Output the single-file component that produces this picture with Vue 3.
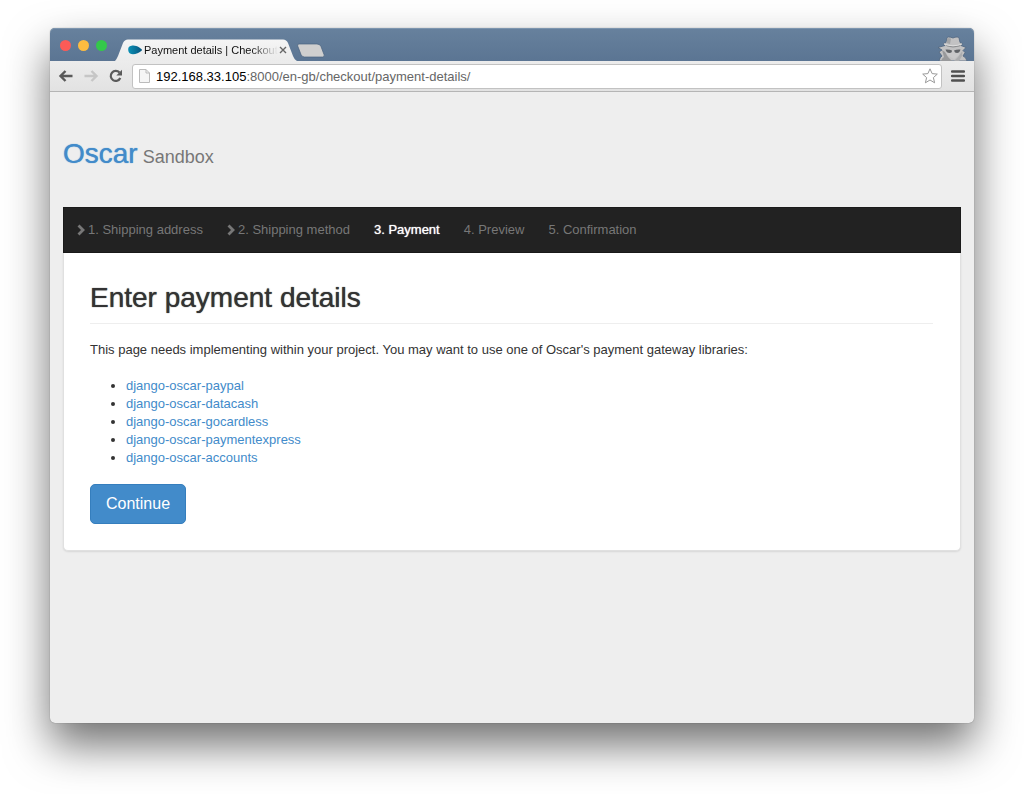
<script setup>
const steps = [
  { label: '1. Shipping address', state: 'done' },
  { label: '2. Shipping method', state: 'done' },
  { label: '3. Payment', state: 'active' },
  { label: '4. Preview', state: 'todo' },
  { label: '5. Confirmation', state: 'todo' },
]
const libraries = [
  'django-oscar-paypal',
  'django-oscar-datacash',
  'django-oscar-gocardless',
  'django-oscar-paymentexpress',
  'django-oscar-accounts',
]
</script>

<template>
  <div class="desktop">
    <div class="window">
      <header class="titlebar">
        <div class="lights">
          <button class="light red" aria-label="Close"></button>
          <button class="light amber" aria-label="Minimise"></button>
          <button class="light green" aria-label="Zoom"></button>
        </div>
        <div class="tab">
          <svg class="tab-shape" viewBox="0 0 182 22" preserveAspectRatio="none" aria-hidden="true">
            <defs>
              <linearGradient id="tabfill" x1="0" y1="0" x2="0" y2="1">
                <stop offset="0" stop-color="#f5f5f5" />
                <stop offset="1" stop-color="#ebebeb" />
              </linearGradient>
            </defs>
            <path d="M0 22C1 21 2 19 3 17L8 4Q9.500 0.500 13 0.500H168Q171.500 0.500 173 4L178 17C179 19 180 21 182 22Z" fill="url(#tabfill)" />
          </svg>
          <svg class="favicon" viewBox="0 0 14 10" aria-hidden="true">
            <defs>
              <linearGradient id="fav" x1="0" x2="1"><stop offset="0" stop-color="#0b91b5" /><stop offset="1" stop-color="#075580" /></linearGradient>
            </defs>
            <path d="M3.500 0.700C6 0 9 1 11 2.300C13 3.600 14 4.500 14 5C14 6 11.500 7.200 9.500 8.200C7 9.300 4 9.800 2 8.500C0 7 -.2 4 .7 2.300C1.300 1.200 2.300 .9 3.500 .7Z" fill="url(#fav)" />
          </svg>
          <span class="tab-title">Payment details | Checkout</span>
          <button class="tab-close" aria-label="Close tab">
            <svg viewBox="0 0 8 8"><path d="M1 1L7 7M7 1L1 7" stroke="#666" stroke-width="1.400" /></svg>
          </button>
        </div>
        <button class="new-tab" aria-label="New tab">
          <svg viewBox="0 0 30 15">
            <path d="M3 1H21Q24 1 25 3.500L28 11.500Q29 14 26.500 14H8.500Q6 14 5 11.500L1.700 3Q1 1 3 1Z" fill="#cfcfcf" stroke="#49627e" stroke-width=".7" />
          </svg>
        </button>
        <svg class="incognito" viewBox="0 0 32 26" aria-hidden="true">
          <path d="M2 26Q3 22 5 21L2 17L5 15L1 12.500L8 10.500Q4.500 8.500 9 7.500L10 3Q10.300 2 11.500 2Q13.500 2 16 3Q18 2 20 2Q21.500 2 22 3L23 7.500Q27 8.500 24 10.500L29 12.500L26 15.500L28 17.500L26 21Q29 22 30 26Z" fill="#c2c2c3" stroke="#50667f" stroke-width=".8" />
          <path d="M10.300 3L14 3.500L13 9L9.500 8Z" fill="#a3a4a6" />
          <path d="M7.500 9Q16 13.500 25 9Q24 12 16 12.500Q9 12 7.500 9Z" fill="#8d8f91" />
          <path d="M7 9Q16 12.500 25 9" fill="none" stroke="#dedede" />
          <path d="M9 14.500Q16 16 23 14.500L22 20L17 24L10 20Z" fill="#c9c9ca" />
          <path d="M8.500 14.500Q12 14 15 15.500Q15 18 12.500 18Q9.500 18 8.500 14.500ZM17 15.500Q20 14 23.500 14.500Q22.500 18 20 18Q17.500 18 17 15.500Z" fill="#606367" />
          <path d="M5 15L8 17L11 22L15 26H4Q5 23 7 22Z" fill="#98999b" />
          <path d="M25.500 16L21 22L17 26H22L25 21Z" fill="#acadaf" />
        </svg>
      </header>

      <div class="toolbar">
        <button class="tool" aria-label="Back">
          <svg viewBox="0 0 16 14"><path d="M14.500 7H3M7.500 2L2.500 7L7.500 12" fill="none" stroke="#5a5a5a" stroke-width="2.400" /></svg>
        </button>
        <button class="tool" aria-label="Forward" disabled>
          <svg viewBox="0 0 16 14"><path d="M1.500 7H13M8.500 2L13.500 7L8.500 12" fill="none" stroke="#c6c6c6" stroke-width="2.400" /></svg>
        </button>
        <button class="tool" aria-label="Reload">
          <svg viewBox="0 0 16 14"><path d="M12.300 9A5 5 0 1 1 11.500 3.600" fill="none" stroke="#5a5a5a" stroke-width="2.200" /><path d="M14 .8V6.500H8.300Z" fill="#5a5a5a" /></svg>
        </button>
        <div class="address">
          <svg class="page-icon" viewBox="0 0 11 14" aria-hidden="true"><path d="M.5 .5H7L10.500 4V13.500H.5Z" fill="#f5f5f5" stroke="#bbb" /><path d="M7 .5V4H10.500" fill="none" stroke="#bbb" /></svg>
          <div class="url"><b>192.168.33.105</b>:8000/en-gb/checkout/payment-details/</div>
          <button class="star" aria-label="Bookmark this page">
            <svg viewBox="0 0 16 16"><path d="M8 .8L10.100 5.600L15.300 6.100L11.400 9.600L12.600 14.800L8 12L3.400 14.800L4.600 9.600L.7 6.100L5.900 5.600Z" fill="#fff" stroke="#999" stroke-linejoin="round" /></svg>
          </button>
        </div>
        <button class="menu" aria-label="Menu">
          <svg viewBox="0 0 14 12"><path d="M1 1.500H13M1 6H13M1 10.500H13" stroke="#505050" stroke-width="2.400" stroke-linecap="round" /></svg>
        </button>
      </div>

      <div class="page">
        <div class="brand"><a href="#">Oscar</a><small>Sandbox</small></div>
        <nav class="steps" aria-label="Checkout progress">
          <ol>
            <li v-for="step in steps" :key="step.label" :class="step.state">
              <svg v-if="step.state === 'done'" class="chevron" viewBox="0 0 8 12" aria-hidden="true"><path d="M1.500 1.500L6 6L1.500 10.500" fill="none" stroke="#777" stroke-width="2.800" /></svg>
              <span>{{ step.label }}</span>
            </li>
          </ol>
        </nav>
        <main class="well">
          <h1>Enter payment details</h1>
          <p>This page needs implementing within your project. You may want to use one of Oscar's payment gateway libraries:</p>
          <ul>
            <li v-for="name in libraries" :key="name"><a href="#">{{ name }}</a></li>
          </ul>
          <button class="continue">Continue</button>
        </main>
      </div>
    </div>
  </div>
</template>

<style>
body {
  margin: 0;
  background: #fff;
}
</style>

<style scoped>
* {
  box-sizing: border-box;
}
.desktop {
  display: flex;
  min-height: 100vh;
  padding: 28px 50px 71px;
  overflow: hidden;
  font-family: "Liberation Sans", Arial, sans-serif;
  font-size: 13px;
  color: #333;
}
button {
  padding: 0;
  border: 0;
  background: none;
  font-family: inherit;
}
svg {
  display: block;
}
a {
  color: #428bca;
  text-decoration: none;
}
.window {
  flex: 1;
  min-width: 0;
  display: flex;
  flex-direction: column;
  border-radius: 5px;
  background: #eee;
  box-shadow: 0 0 1px rgba(0, 0, 0, 0.5), 0 22px 44px rgba(0, 0, 0, 0.56);
}
.titlebar {
  display: flex;
  align-items: flex-end;
  height: 33px;
  padding-right: 5px;
  border-radius: 5px 5px 0 0;
  background: linear-gradient(#67819d, #5b7593);
  box-shadow: inset 0 1px #7d95ae;
}
.lights {
  display: flex;
  gap: 7px;
  align-self: center;
  padding: 2px 8px 0 10px;
}
.light {
  width: 11px;
  height: 11px;
  border-radius: 50%;
}
.red { background: #fc5b57; }
.amber { background: #fdbc40; }
.green { background: #34c84a; }
.tab {
  position: relative;
  display: flex;
  align-items: center;
  width: 182px;
  height: 22px;
  padding: 0 13px 0 13px;
}
.tab-shape {
  position: absolute;
  inset: 0;
  width: 100%;
  height: 100%;
}
.favicon,
.tab-title,
.tab-close {
  position: relative;
}
.favicon {
  flex: none;
  width: 14px;
  height: 10px;
}
.tab-title {
  flex: 1;
  margin: 0 1px 0 2px;
  white-space: nowrap;
  font-size: 11px;
  color: #111;
  mask-image: linear-gradient(to right, #000 80%, transparent);
}
.tab-close svg {
  width: 8px;
  height: 8px;
}
.new-tab {
  margin: 0 auto 3px -1px;
}
.new-tab svg {
  width: 30px;
  height: 15px;
}
.incognito {
  width: 32px;
  height: 26px;
}
.toolbar {
  display: flex;
  align-items: center;
  gap: 9px;
  height: 31px;
  padding: 0 9px 0 8px;
  background: linear-gradient(#ececec, #e2e2e2);
  border-bottom: 1px solid #b5b5b5;
}
.tool svg {
  width: 16px;
  height: 14px;
}
.address {
  flex: 1;
  display: flex;
  align-items: center;
  height: 25px;
  margin-left: -1px;
  padding: 0 3px 0 6px;
  border: 1px solid #c2c2c2;
  border-radius: 3px;
  background: #fff;
}
.page-icon {
  width: 11px;
  height: 14px;
}
.url {
  flex: 1;
  margin-left: 6px;
  font-size: 13px;
  color: #666;
}
.url b {
  font-weight: 400;
  color: #000;
}
.star svg {
  width: 16px;
  height: 16px;
}
.menu svg {
  width: 14px;
  height: 12px;
}
.page {
  padding: 44px 13px 20px;
}
.brand {
  display: flex;
  align-items: baseline;
  gap: 5px;
  padding-bottom: 36px;
  line-height: 35px;
  font-size: 28px;
}
.brand a,
h1,
.steps .active {
  text-shadow: 0 0 1px currentColor;
}
.brand small {
  line-height: 20px;
  font-size: 18px;
  color: #777;
}
.steps {
  border: 1px solid #1a1a1a;
  background: #222;
}
.steps ol {
  display: flex;
  gap: 24px;
  margin: 0;
  padding: 0 13px;
  list-style: none;
  line-height: 44px;
  color: #777;
}
.steps li {
  display: flex;
  align-items: center;
  gap: 3px;
}
.steps .active {
  color: #fff;
}
.chevron {
  width: 8px;
  height: 12px;
}
.well {
  padding: 27px 27px 26px 26px;
  border: 1px solid #e0e0e0;
  border-top: 0;
  border-radius: 0 0 5px 5px;
  background: #fff;
  box-shadow: 0 1px 2px rgba(0, 0, 0, 0.1);
}
h1 {
  margin: 0 0 17px;
  padding-bottom: 8px;
  border-bottom: 1px solid #eee;
  line-height: 35px;
  font-size: 28px;
  font-weight: 400;
}
p {
  margin: 0 0 18px;
  line-height: 18px;
}
ul {
  margin: 0 0 17px;
  padding-left: 36px;
  line-height: 18px;
}
.continue {
  height: 40px;
  padding: 0 15px;
  border: 1px solid #357ebd;
  border-radius: 5px;
  background: #428bca;
  font-size: 16px;
  color: #fff;
}
</style>
